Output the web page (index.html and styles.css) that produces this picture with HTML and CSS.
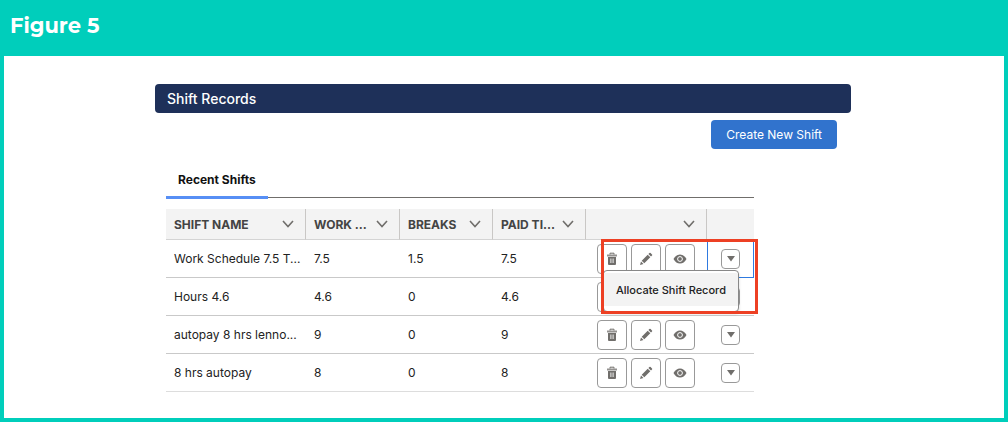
FILE: index.html
```html
<!DOCTYPE html>
<html lang="en">
<head>
    <meta charset="UTF-8">
    <meta name="viewport" content="width=device-width, initial-scale=1.0">
    <title>Shift Records</title>
    <link rel="stylesheet" href="styles.css">
</head>
<body>
    <!-- Shared icons -->
    <svg class="icon-sprite" aria-hidden="true">
        <symbol id="icon-chevron" viewBox="0 0 12 8">
            <path d="M1 1l5 5.5L11 1" fill="none" stroke="currentColor" stroke-width="1.6"/>
        </symbol>
        <symbol id="icon-trash" viewBox="0 0 12 14">
            <path d="M4 2.5V1.2h4v1.3" fill="none" stroke="currentColor"/>
            <path d="M1 2.500h10v2H1z" fill="currentColor" opacity="0.75"/>
            <path d="M2 5h8v7q0 1-1 1H3q-1 0-1-1z" fill="currentColor"/>
            <path d="M4.900 6.500v4.500M7.100 6.500v4.500" stroke="#fff" stroke-width="0.900"/>
        </symbol>
        <symbol id="icon-pencil" viewBox="0 0 14 14">
            <path d="M1 13l1-3.5L4.5 12zM2.7 8.7l6-6 2.6 2.6-6 6zM9.4 2l1-1q.6-.5 1.2 0L13 2.400q.5.600 0 1.200l-1 1z" fill="currentColor"/>
        </symbol>
        <symbol id="icon-eye" viewBox="0 0 14 10">
            <path d="M.5 5q2.500-4.500 6.500-4.500t6.500 4.500q-2.500 4.500-6.500 4.500T.5 5z" fill="currentColor"/>
            <circle cx="7" cy="5" r="2.400" fill="currentColor" stroke="#fff"/>
        </symbol>
        <symbol id="icon-down" viewBox="0 0 8 6">
            <path d="M0 0h8L4 5.500z" fill="currentColor"/>
        </symbol>
    </svg>

    <header class="figure-header">
        <h1>Figure 5</h1>
    </header>

    <main>
        <section class="panel">
            <h2 class="panel-title">Shift Records</h2>
            <div class="panel-actions">
                <button type="button" class="create-button">Create New Shift</button>
            </div>

            <div class="shifts">
                <nav class="tabs">
                    <a href="#recent" class="tab">Recent Shifts</a>
                </nav>

                <table id="recent">
                    <colgroup>
                        <col class="col-name">
                        <col class="col-work">
                        <col class="col-hours">
                        <col class="col-hours">
                        <col class="col-actions">
                        <col class="col-menu">
                    </colgroup>
                    <thead>
                        <tr>
                            <th><div class="head">SHIFT NAME <svg class="chevron"><use href="#icon-chevron"/></svg></div></th>
                            <th><div class="head">WORK ... <svg class="chevron"><use href="#icon-chevron"/></svg></div></th>
                            <th><div class="head">BREAKS <svg class="chevron"><use href="#icon-chevron"/></svg></div></th>
                            <th><div class="head">PAID TI... <svg class="chevron"><use href="#icon-chevron"/></svg></div></th>
                            <th><div class="head head-empty"><svg class="chevron"><use href="#icon-chevron"/></svg></div></th>
                            <th></th>
                        </tr>
                    </thead>
                    <tbody>
                        <tr>
                            <td>Work Schedule 7.5 T...</td>
                            <td>7.5</td>
                            <td>1.5</td>
                            <td>7.5</td>
                            <td>
                                <div class="actions">
                                    <button type="button" class="icon-button" aria-label="Delete"><svg class="trash"><use href="#icon-trash"/></svg></button>
                                    <button type="button" class="icon-button" aria-label="Edit"><svg class="pencil"><use href="#icon-pencil"/></svg></button>
                                    <button type="button" class="icon-button" aria-label="View"><svg class="eye"><use href="#icon-eye"/></svg></button>
                                </div>
                            </td>
                            <td class="menu-cell active">
                                <button type="button" class="menu-button" aria-label="More"><svg class="down"><use href="#icon-down"/></svg></button>
                                <div class="menu">
                                    <button type="button" class="menu-item">Allocate Shift Record</button>
                                </div>
                                <div class="highlight"></div>
                            </td>
                        </tr>
                        <tr>
                            <td>Hours 4.6</td>
                            <td>4.6</td>
                            <td>0</td>
                            <td>4.6</td>
                            <td>
                                <div class="actions">
                                    <button type="button" class="icon-button" aria-label="Delete"><svg class="trash"><use href="#icon-trash"/></svg></button>
                                    <button type="button" class="icon-button" aria-label="Edit"><svg class="pencil"><use href="#icon-pencil"/></svg></button>
                                    <button type="button" class="icon-button" aria-label="View"><svg class="eye"><use href="#icon-eye"/></svg></button>
                                </div>
                            </td>
                            <td class="menu-cell">
                                <button type="button" class="menu-button" aria-label="More"><svg class="down"><use href="#icon-down"/></svg></button>
                            </td>
                        </tr>
                        <tr>
                            <td>autopay 8 hrs lenno...</td>
                            <td>9</td>
                            <td>0</td>
                            <td>9</td>
                            <td>
                                <div class="actions">
                                    <button type="button" class="icon-button" aria-label="Delete"><svg class="trash"><use href="#icon-trash"/></svg></button>
                                    <button type="button" class="icon-button" aria-label="Edit"><svg class="pencil"><use href="#icon-pencil"/></svg></button>
                                    <button type="button" class="icon-button" aria-label="View"><svg class="eye"><use href="#icon-eye"/></svg></button>
                                </div>
                            </td>
                            <td class="menu-cell">
                                <button type="button" class="menu-button" aria-label="More"><svg class="down"><use href="#icon-down"/></svg></button>
                            </td>
                        </tr>
                        <tr>
                            <td>8 hrs autopay</td>
                            <td>8</td>
                            <td>0</td>
                            <td>8</td>
                            <td>
                                <div class="actions">
                                    <button type="button" class="icon-button" aria-label="Delete"><svg class="trash"><use href="#icon-trash"/></svg></button>
                                    <button type="button" class="icon-button" aria-label="Edit"><svg class="pencil"><use href="#icon-pencil"/></svg></button>
                                    <button type="button" class="icon-button" aria-label="View"><svg class="eye"><use href="#icon-eye"/></svg></button>
                                </div>
                            </td>
                            <td class="menu-cell">
                                <button type="button" class="menu-button" aria-label="More"><svg class="down"><use href="#icon-down"/></svg></button>
                            </td>
                        </tr>
                    </tbody>
                </table>
            </div>
        </section>
    </main>
</body>
</html>
```

FILE: styles.css
```css
* {
    box-sizing: border-box;
}

body {
    font-family: Inter, "Liberation Sans", sans-serif;
    font-size: 12px;
    background-color: #00cebb;
    color: #222;
    margin: 0;
    padding: 0 4px 4px;
}

button {
    font-family: inherit;
    cursor: pointer;
}

svg {
    display: block;
}

.icon-sprite {
    display: none;
}

.figure-header {
    height: 56px;
    padding: 12px 6px;
}

.figure-header h1 {
    margin: 0;
    font-family: Montserrat, Inter, sans-serif;
    font-size: 21px;
    line-height: 28px;
    color: #fff;
}

main {
    background-color: #fff;
    padding: 28px 2px 26px 0;
}

.panel {
    max-width: 696px;
    margin: 0 auto;
}

.panel-title {
    margin: 0;
    padding: 0 12px;
    font-size: 14px;
    font-weight: 500;
    line-height: 29px;
    color: #fff;
    background-color: #1e3059;
    border-radius: 4px;
}

.panel-actions {
    display: flex;
    justify-content: flex-end;
    padding: 7px 14px 0;
}

.create-button {
    height: 29px;
    padding: 0 15px;
    font-size: 12px;
    color: #fff;
    background-color: #3173cd;
    border: none;
    border-radius: 4px;
}

.shifts {
    margin: 14px 97px 0 11px;
}

.tabs {
    display: flex;
    height: 35px;
    margin-bottom: 11px;
    border-bottom: 1px solid #706e6b;
}

.tab {
    height: 36px;
    padding: 0 12px;
    font-weight: 700;
    line-height: 34px;
    color: #111;
    text-decoration: none;
    border-bottom: 3px solid #578ff5;
}

table {
    width: 100%;
    table-layout: fixed;
    border-collapse: separate;
    border-spacing: 0;
}

.col-name {
    width: 140px;
}

.col-work {
    width: 94px;
}

.col-hours {
    width: 93px;
}

.col-actions {
    width: 121px;
}

.col-menu {
    width: 47px;
}

th {
    height: 31px;
    padding: 0 11px 0 8px;
    color: #444;
    text-align: left;
    background-color: #f3f3f3;
    border-right: 1px solid #c9c7c5;
    border-bottom: 1px solid #d4d4d4;
}

th:last-child {
    border-right: none;
}

.head {
    display: flex;
    align-items: center;
    justify-content: space-between;
    white-space: nowrap;
}

.head-empty {
    justify-content: flex-end;
}

.chevron {
    width: 12px;
    height: 8px;
    color: #706e6b;
    flex-shrink: 0;
}

td {
    height: 38px;
    padding: 0 0 0 8px;
    white-space: nowrap;
    border-bottom: 1px solid #c9c9c9;
}

tr:last-child td {
    border-bottom-color: #ddd;
}

.actions {
    display: flex;
    gap: 4px;
    padding-left: 3px;
}

.icon-button,
.menu-button {
    display: flex;
    align-items: center;
    justify-content: center;
    padding: 0;
    color: #706e6b;
    background-color: #fff;
    border: 1px solid #999;
    border-radius: 4px;
}

.icon-button {
    width: 30px;
    height: 30px;
}

.menu-cell {
    position: relative;
    padding: 0;
}

.menu-button {
    width: 19px;
    height: 20px;
    margin: 0 auto;
}

.trash {
    width: 12px;
    height: 14px;
}

.pencil {
    width: 14px;
    height: 14px;
}

.eye {
    width: 14px;
    height: 10px;
}

.down {
    width: 8px;
    height: 6px;
}

.menu-cell.active {
    border: 1px solid #2f7ae0;
}

/* Row menu, opened over the row below */
.menu {
    position: absolute;
    z-index: 1;
    top: 29px;
    right: 14px;
    width: 136px;
    padding: 2px 0 5px;
    background-color: #fff;
    border: 1px solid #888;
    border-radius: 4px;
    box-shadow: 0 2px 3px rgba(0, 0, 0, 0.15);
}

.menu-item {
    width: 100%;
    height: 33px;
    padding: 0;
    font-size: 11px;
    font-weight: 500;
    color: #222;
    background-color: #f3f3f3;
    border: none;
}

.highlight {
    position: absolute;
    z-index: 2;
    top: -2px;
    right: -5px;
    width: 157px;
    height: 75px;
    border: 3px solid #ed4024;
    pointer-events: none;
}
```
